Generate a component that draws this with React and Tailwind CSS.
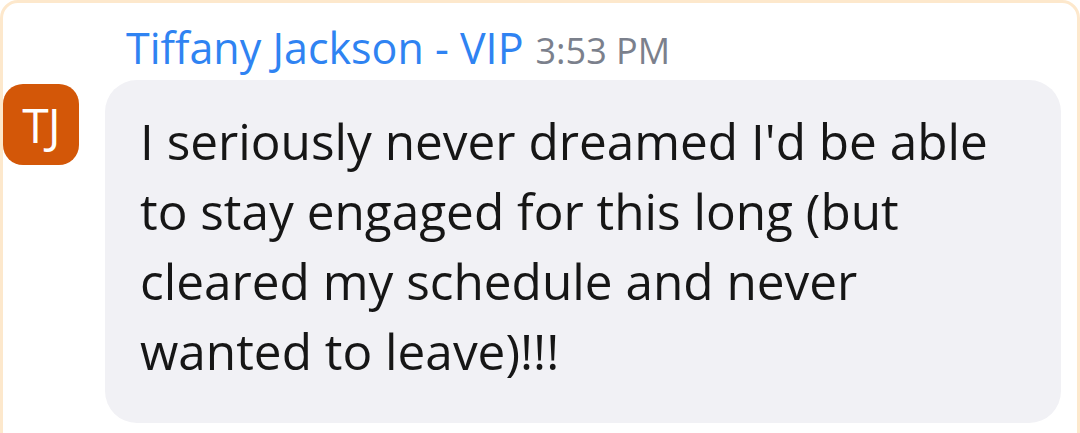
import React from 'react';

const App = () => {
  return (
    <div className="w-[1080px] h-[433px] overflow-hidden bg-white" style={{ fontFamily: '"Open Sans", "Noto Sans", sans-serif' }}>
      <div className="h-[460px] border-[3px] border-[#fde8cc] rounded-[18px] bg-white flex">
        <div className="pt-[81px] shrink-0">
          <div className="w-[76px] h-[81px] rounded-[20px] bg-[#d35708] flex items-center justify-center text-white text-[48px] font-normal tracking-[-1px] leading-none">
            TJ
          </div>
        </div>

        <div className="flex-1 ml-[26px] mr-[16px]">
          <div className="flex items-baseline gap-[12px] pl-[21px] pt-[25px] h-[77px] whitespace-nowrap">
            <span className="text-[43px] leading-[40px] text-[#2f83f2]">Tiffany Jackson - VIP</span>
            <span className="text-[36px] leading-[40px] text-[#7b808c]">3:53 PM</span>
          </div>
          <div className="bg-[#f1f1f5] rounded-[32px] h-[343px] pl-[35px] pt-[26px]">
            <p className="text-[49.5px] leading-[70px] text-[#161616]">
              I seriously never dreamed I'd be able<br />
              to stay engaged for this long (but<br />
              cleared my schedule and never<br />
              wanted to leave)!!!
            </p>
          </div>
        </div>
      </div>
    </div>
  );
};

export default App;
